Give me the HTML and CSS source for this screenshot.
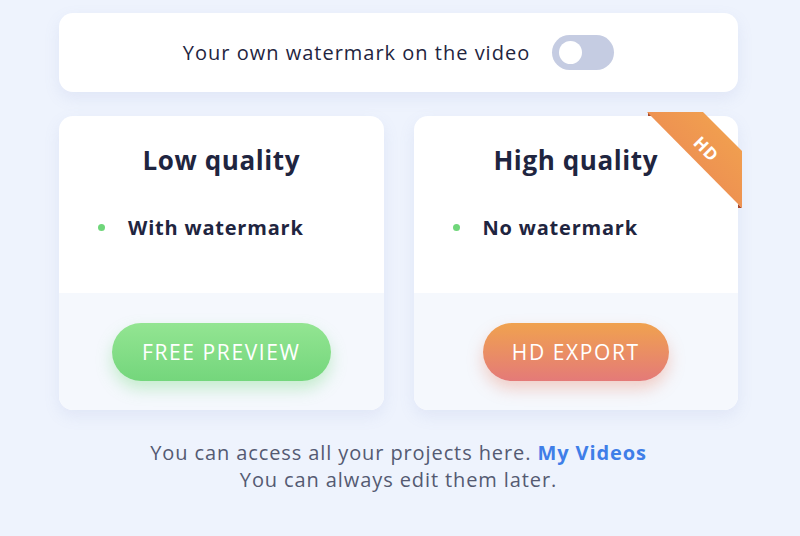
FILE: index.html
```html
<!DOCTYPE html>
<html lang="en">
<head>
  <meta charset="UTF-8" />
  <title>Export</title>
  <link rel="stylesheet" href="styles.css">
</head>
<body>

  <div class="page">
    <div class="watermark-bar">
      <span>Your own watermark on the video</span>
      <div class="toggle"><div class="knob"></div></div>
    </div>

    <div class="plans">
      <div class="plan">
        <div class="plan-top">
          <h2>Low quality</h2>
          <ul>
            <li>With watermark</li>
          </ul>
        </div>
        <div class="plan-bottom">
          <a class="btn btn-green" href="#">FREE PREVIEW</a>
        </div>
      </div>

      <div class="plan">
        <svg class="ribbon" width="100" height="100" viewBox="0 0 100 100">
          <defs>
            <linearGradient id="rib" x1="1" y1="0" x2="0" y2="1">
              <stop offset="0" stop-color="#f2a64e"/>
              <stop offset="1" stop-color="#ea7f55"/>
            </linearGradient>
          </defs>
          <polygon points="6,0 10,4 6,4" fill="#a8492c"/>
          <polygon points="96,92 100,96 96,96" fill="#a8492c"/>
          <polygon points="5,0 61,0 100,39 100,96" fill="url(#rib)"/>
          <text x="64" y="43" transform="rotate(45 64 37)" text-anchor="middle" class="ribbon-text">HD</text>
        </svg>
        <div class="plan-top">
          <h2>High quality</h2>
          <ul>
            <li>No watermark</li>
          </ul>
        </div>
        <div class="plan-bottom">
          <a class="btn btn-orange" href="#">HD EXPORT</a>
        </div>
      </div>
    </div>

    <p class="note">
      You can access all your projects here. <a href="#">My Videos</a><br>
      You can always edit them later.
    </p>
  </div>

</body>
</html>
```

FILE: styles.css
```css
* {
  box-sizing: border-box;
}

body {
  margin: 0;
  background-color: #eef3fd;
  font-family: "Open Sans", sans-serif;
  color: #1f2540;
}

.page {
  width: 679px;
  margin-left: 59px;
  padding-top: 13px;
}

.watermark-bar {
  height: 79px;
  background-color: #fff;
  border-radius: 14px;
  box-shadow: 0 6px 16px rgba(120, 140, 200, 0.12);
  display: flex;
  align-items: center;
  justify-content: center;
  gap: 22px;
  font-size: 20px;
  letter-spacing: 1px;
}

.toggle {
  width: 62px;
  height: 35px;
  border-radius: 18px;
  background-color: #c5cce2;
  padding: 6px 0 0 7px;
}

.knob {
  width: 23px;
  height: 23px;
  border-radius: 50%;
  background-color: #fff;
}

.plans {
  display: flex;
  gap: 30px;
  margin-top: 24px;
}

.plan {
  position: relative;
  flex: 1;
  height: 294px;
  background-color: #fff;
  border-radius: 14px;
  box-shadow: 0 6px 16px rgba(120, 140, 200, 0.12);
  display: flex;
  flex-direction: column;
}

.plan-top {
  height: 177px;
  padding-top: 26px;
}

.plan h2 {
  margin: 0;
  text-align: center;
  font-size: 26px;
  font-weight: 700;
  line-height: 36px;
  letter-spacing: 0.6px;
}

.plan ul {
  list-style: none;
  margin: 37px 0 0;
  padding: 0 0 0 39px;
}

.plan li {
  font-size: 20px;
  font-weight: 700;
  line-height: 26px;
  letter-spacing: 0.8px;
  display: flex;
  align-items: center;
}

.plan li::before {
  content: "";
  width: 7px;
  height: 7px;
  border-radius: 50%;
  background-color: #6fd67a;
  margin: -2px 23px 0 0;
}

.plan-bottom {
  flex: 1;
  background-color: #f5f8fd;
  border-radius: 0 0 14px 14px;
  display: flex;
  align-items: center;
  justify-content: center;
}

.btn {
  display: inline-block;
  height: 58px;
  line-height: 58px;
  padding: 0 30px;
  border-radius: 29px;
  color: #fff;
  font-size: 21px;
  letter-spacing: 1.6px;
  text-decoration: none;
}

.btn-green {
  background: linear-gradient(#93e592, #74d67c);
  box-shadow: 0 8px 16px rgba(110, 214, 120, 0.35);
}

.btn-orange {
  padding: 0 29px;
  background: linear-gradient(#f0a24f, #e47a78);
  box-shadow: 0 8px 16px rgba(232, 130, 100, 0.35);
}

.ribbon {
  position: absolute;
  top: -4px;
  right: -4px;
}

.ribbon-text {
  fill: #fff;
  font-family: "Open Sans", sans-serif;
  font-size: 17px;
  font-weight: 700;
  letter-spacing: 0.5px;
}

.note {
  margin: 29px 0 0;
  text-align: center;
  font-size: 20px;
  line-height: 27px;
  letter-spacing: 0.9px;
  color: #545a72;
}

.note a {
  color: #3f7ee8;
  font-weight: 700;
  text-decoration: none;
}
```
